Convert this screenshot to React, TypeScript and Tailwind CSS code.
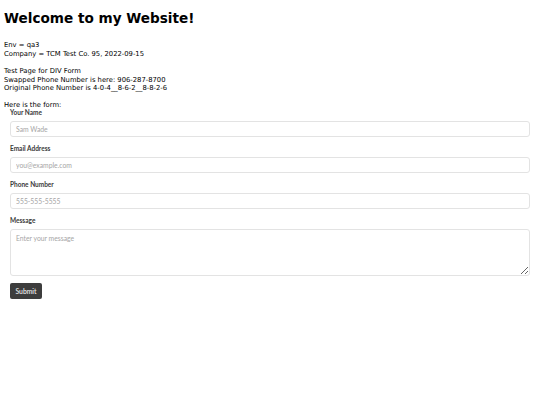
import React from 'react';

const FIELDS = [
  { label: 'Your Name', placeholder: 'Sam Wade', type: 'text' },
  { label: 'Email Address', placeholder: 'you@example.com', type: 'email' },
  { label: 'Phone Number', placeholder: '555-555-5555', type: 'tel' },
];

export default function App() {
  return (
    <div className="min-h-[405px] bg-white px-[4px] text-black font-['DejaVu_Sans',sans-serif]">
      <h1 className="pt-[10px] text-[13.6px] font-bold leading-[16px]">Welcome to my Website!</h1>

      <div className="mt-[15px] text-[6.8px] leading-[8.5px]">
        <div>Env = qa3</div>
        <div>Company = TCM Test Co. 95, 2022-09-15</div>
        <div className="mt-[9px]">Test Page for DIV Form</div>
        <div>Swapped Phone Number is here: 906-287-8700</div>
        <div>Original Phone Number is 4-0-4__8-6-2__8-8-2-6</div>
        <div className="mt-[8px]">Here is the form:</div>
      </div>

      <form
        className="px-[6px] font-['Lato',sans-serif]"
        onSubmit={(e) => e.preventDefault()}
      >
        {FIELDS.map((f) => (
          <div key={f.label} className="mb-[8px]">
            <label className="mb-[4px] block text-[6.5px] font-bold leading-[8px] text-[#3a3a3a]">
              {f.label}
            </label>
            <input
              type={f.type}
              placeholder={f.placeholder}
              className="block h-[16px] w-full rounded-[3px] border border-[#e3e3e3] px-[5px] text-[6.8px] placeholder:text-[#a6a6a6] outline-none"
            />
          </div>
        ))}
        <div className="mb-[7px]">
          <label className="mb-[4px] block text-[6.5px] font-bold leading-[8px] text-[#3a3a3a]">
            Message
          </label>
          <textarea
            placeholder="Enter your message"
            className="block h-[47px] w-full rounded-[3px] border border-[#e3e3e3] px-[5px] py-[4px] text-[6.8px] leading-[8px] placeholder:text-[#a6a6a6] outline-none"
          />
        </div>
        <button
          type="submit"
          className="block h-[16px] w-[32px] rounded-[2px] bg-[#3d3d3d] text-center text-[6.8px] font-semibold text-[#e8e8e8]"
        >
          Submit
        </button>
      </form>
    </div>
  );
}
